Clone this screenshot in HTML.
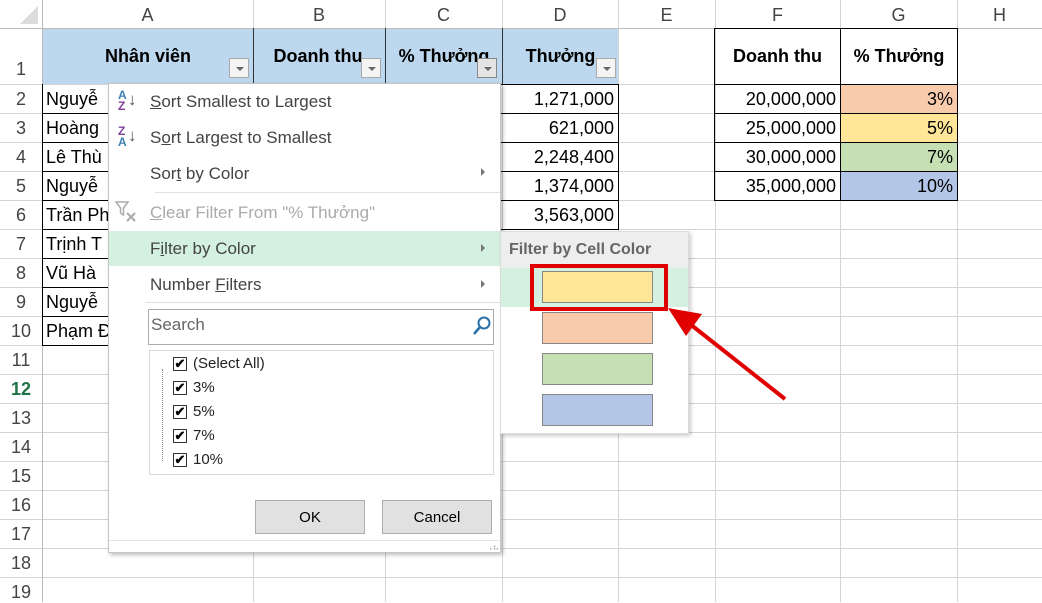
<!DOCTYPE html>
<html><head><meta charset="utf-8"><style>
*{margin:0;padding:0;box-sizing:border-box}
body{width:1042px;height:602px;overflow:hidden;background:#fff;font-family:"Liberation Sans",sans-serif;position:relative}
.a{position:absolute}
.vl{position:absolute;top:0;width:1px;height:602px;background:#d4d4d4}
.hl{position:absolute;left:0;height:1px;width:1042px;background:#d4d4d4}
.ch{position:absolute;top:0;height:28px;line-height:30px;text-align:center;color:#444;font-size:18px}
.rh{position:absolute;left:0;width:42px;text-align:center;color:#444;font-size:18px}
.c{position:absolute;font-size:18px;color:#000;white-space:nowrap;overflow:hidden}
.r{text-align:right;padding-right:4px}
.b{font-weight:bold}
.dd{position:absolute;width:20px;height:20px;border:1px solid #aaa;background:#f4f4f4}
.dd:after{content:"";position:absolute;left:6px;top:8px;border-left:4px solid transparent;border-right:4px solid transparent;border-top:4px solid #666}
.mi{position:absolute;left:150px;font-size:17px;color:#444}
.sw{position:absolute;left:542px;width:111px;height:32px;border:1px solid #888}
.cb{position:absolute;left:173px;width:14px;height:14px;border:1px solid #333;font-size:13px;line-height:12px;text-align:center;font-weight:bold}
.cl{position:absolute;left:193px;font-size:15px;color:#222}
</style></head><body>
<div class="hl" style="top:28px;background:#bbb"></div>
<div class="hl" style="top:84px"></div><div class="hl" style="top:113px"></div><div class="hl" style="top:142px"></div><div class="hl" style="top:171px"></div><div class="hl" style="top:200px"></div><div class="hl" style="top:229px"></div><div class="hl" style="top:258px"></div><div class="hl" style="top:287px"></div><div class="hl" style="top:316px"></div><div class="hl" style="top:345px"></div><div class="hl" style="top:374px"></div><div class="hl" style="top:403px"></div><div class="hl" style="top:432px"></div><div class="hl" style="top:461px"></div><div class="hl" style="top:490px"></div><div class="hl" style="top:519px"></div><div class="hl" style="top:548px"></div><div class="hl" style="top:577px"></div>
<div class="vl" style="left:42px;background:#bbb"></div><div class="vl" style="left:253px"></div><div class="vl" style="left:385px"></div><div class="vl" style="left:502px"></div><div class="vl" style="left:618px"></div><div class="vl" style="left:715px"></div><div class="vl" style="left:840px"></div><div class="vl" style="left:957px"></div>
<div class="a" style="left:0;top:0;width:42px;height:28px;background:#fff"></div>
<div class="a" style="left:20px;top:6px;width:0;height:0;border-left:18px solid transparent;border-bottom:18px solid #dcdcdc"></div>
<div class="ch" style="left:42px;width:211px">A</div><div class="ch" style="left:253px;width:132px">B</div><div class="ch" style="left:385px;width:117px">C</div><div class="ch" style="left:502px;width:116px">D</div><div class="ch" style="left:618px;width:97px">E</div><div class="ch" style="left:715px;width:125px">F</div><div class="ch" style="left:840px;width:117px">G</div><div class="ch" style="left:957px;width:85px">H</div>
<div class="rh" style="top:59px">1</div><div class="rh" style="top:89px">2</div><div class="rh" style="top:118px">3</div><div class="rh" style="top:147px">4</div><div class="rh" style="top:176px">5</div><div class="rh" style="top:205px">6</div><div class="rh" style="top:234px">7</div><div class="rh" style="top:263px">8</div><div class="rh" style="top:292px">9</div><div class="rh" style="top:321px">10</div><div class="rh" style="top:350px">11</div><div class="rh" style="top:379px;color:#217346;font-weight:bold">12</div><div class="rh" style="top:408px">13</div><div class="rh" style="top:437px">14</div><div class="rh" style="top:466px">15</div><div class="rh" style="top:495px">16</div><div class="rh" style="top:524px">17</div><div class="rh" style="top:553px">18</div><div class="rh" style="top:582px">19</div>
<div class="a" style="left:43px;top:29px;width:575px;height:55px;background:#bdd7ee"></div>
<div class="a" style="left:253px;top:28px;width:1px;height:56px;background:#333"></div>
<div class="a" style="left:385px;top:28px;width:1px;height:56px;background:#333"></div>
<div class="a" style="left:502px;top:28px;width:1px;height:56px;background:#333"></div>
<div class="c b" style="left:43px;top:46px;width:210px;text-align:center">Nhân viên</div>
<div class="c b" style="left:254px;top:46px;width:128px;text-align:center">Doanh thu</div>
<div class="c b" style="left:386px;top:46px;width:116px;text-align:center">% Thưởng</div>
<div class="c b" style="left:503px;top:46px;width:115px;text-align:center">Thưởng</div>
<div class="dd" style="left:229px;top:58px"></div><div class="dd" style="left:361px;top:58px"></div><div class="dd" style="left:477px;top:58px;border-color:#888;background:#e4e4e4"></div><div class="dd" style="left:596px;top:58px"></div>
<div class="a" style="left:42px;top:84px;width:1px;height:261px;background:#000"></div>
<div class="a" style="left:42px;top:84px;width:70px;height:262px;border-bottom:1px solid #000"></div>
<div class="c" style="left:46px;top:89px">Nguyễ</div><div class="c" style="left:46px;top:118px">Hoàng</div><div class="c" style="left:46px;top:147px">Lê Thù</div><div class="c" style="left:46px;top:176px">Nguyễ</div><div class="c" style="left:46px;top:205px">Trần Ph</div><div class="c" style="left:46px;top:234px">Trịnh T</div><div class="c" style="left:46px;top:263px">Vũ Hà</div><div class="c" style="left:46px;top:292px">Nguyễ</div><div class="c" style="left:46px;top:321px">Phạm Đ</div>
<div class="a" style="left:42px;top:113px;width:66px;height:1px;background:#000"></div><div class="a" style="left:42px;top:142px;width:66px;height:1px;background:#000"></div><div class="a" style="left:42px;top:171px;width:66px;height:1px;background:#000"></div><div class="a" style="left:42px;top:200px;width:66px;height:1px;background:#000"></div><div class="a" style="left:42px;top:229px;width:66px;height:1px;background:#000"></div><div class="a" style="left:42px;top:258px;width:66px;height:1px;background:#000"></div><div class="a" style="left:42px;top:287px;width:66px;height:1px;background:#000"></div><div class="a" style="left:42px;top:316px;width:66px;height:1px;background:#000"></div>
<div class="a" style="left:500px;top:84px;width:119px;height:146px;border:1px solid #000;border-left:none"></div>
<div class="a" style="left:500px;top:113px;width:118px;height:1px;background:#000"></div><div class="a" style="left:500px;top:142px;width:118px;height:1px;background:#000"></div><div class="a" style="left:500px;top:171px;width:118px;height:1px;background:#000"></div><div class="a" style="left:500px;top:200px;width:118px;height:1px;background:#000"></div>
<div class="c r" style="left:503px;top:89px;width:115px">1,271,000</div><div class="c r" style="left:503px;top:118px;width:115px">621,000</div><div class="c r" style="left:503px;top:147px;width:115px">2,248,400</div><div class="c r" style="left:503px;top:176px;width:115px">1,374,000</div><div class="c r" style="left:503px;top:205px;width:115px">3,563,000</div>
<div class="a" style="left:841px;top:85px;width:116px;height:28px;background:#f8cbad"></div>
<div class="a" style="left:841px;top:114px;width:116px;height:28px;background:#ffe699"></div>
<div class="a" style="left:841px;top:143px;width:116px;height:28px;background:#c6e0b4"></div>
<div class="a" style="left:841px;top:172px;width:116px;height:28px;background:#b4c6e7"></div>
<div class="a" style="left:714px;top:28px;width:244px;height:173px;border:1px solid #000"></div>
<div class="a" style="left:840px;top:28px;width:1px;height:172px;background:#000"></div>
<div class="a" style="left:714px;top:84px;width:243px;height:1px;background:#000"></div><div class="a" style="left:714px;top:113px;width:243px;height:1px;background:#000"></div><div class="a" style="left:714px;top:142px;width:243px;height:1px;background:#000"></div><div class="a" style="left:714px;top:171px;width:243px;height:1px;background:#000"></div>
<div class="c b" style="left:715px;top:46px;width:125px;text-align:center">Doanh thu</div>
<div class="c b" style="left:841px;top:46px;width:116px;text-align:center">% Thưởng</div>
<div class="c r" style="left:715px;top:89px;width:125px">20,000,000</div><div class="c r" style="left:715px;top:118px;width:125px">25,000,000</div><div class="c r" style="left:715px;top:147px;width:125px">30,000,000</div><div class="c r" style="left:715px;top:176px;width:125px">35,000,000</div>
<div class="c r" style="left:841px;top:89px;width:116px">3%</div><div class="c r" style="left:841px;top:118px;width:116px">5%</div><div class="c r" style="left:841px;top:147px;width:116px">7%</div><div class="c r" style="left:841px;top:176px;width:116px">10%</div>
<div class="a" style="left:108px;top:83px;width:393px;height:470px;background:#fff;border:1px solid #c6c6c6;box-shadow:2px 2px 4px rgba(0,0,0,.25)"></div>
<div class="a" style="left:109px;top:231px;width:391px;height:35px;background:#d3f0e0"></div>
<div class="a" style="left:118px;top:90px;font-size:12px;font-weight:bold;line-height:11px;color:#3c7fb1">A<br><span style="color:#7e3f98">Z</span></div><div class="a" style="left:128px;top:90px;font-size:17px;color:#555">↓</div>
<div class="a" style="left:118px;top:126px;font-size:12px;font-weight:bold;line-height:11px;color:#7e3f98">Z<br><span style="color:#3c7fb1">A</span></div><div class="a" style="left:128px;top:126px;font-size:17px;color:#555">↓</div>
<div class="mi" style="top:92px"><u>S</u>ort Smallest to Largest</div>
<div class="mi" style="top:128px">S<u>o</u>rt Largest to Smallest</div>
<div class="mi" style="top:164px">Sor<u>t</u> by Color</div>
<div class="a" style="left:155px;top:192px;width:345px;height:1px;background:#e0e0e0"></div>
<svg class="a" style="left:115px;top:201px" width="24" height="22" viewBox="0 0 24 22"><path d="M1 1H13L8.5 7V14L5.5 12V7Z" fill="none" stroke="#aaa" stroke-width="1.5"/><path d="M12 12L20 20M20 12L12 20" stroke="#aaa" stroke-width="2"/></svg>
<div class="mi" style="top:203px;color:#aaa"><u>C</u>lear Filter From "% Thưởng"</div>
<div class="mi" style="top:239px">F<u>i</u>lter by Color</div>
<div class="mi" style="top:275px">Number <u>F</u>ilters</div>
<div class="a" style="left:481px;top:168px;border-top:4px solid transparent;border-bottom:4px solid transparent;border-left:4px solid #777"></div>
<div class="a" style="left:481px;top:244px;border-top:4px solid transparent;border-bottom:4px solid transparent;border-left:4px solid #777"></div>
<div class="a" style="left:481px;top:280px;border-top:4px solid transparent;border-bottom:4px solid transparent;border-left:4px solid #777"></div>
<div class="a" style="left:145px;top:302px;width:355px;height:1px;background:#e0e0e0"></div>
<div class="a" style="left:148px;top:309px;width:346px;height:36px;border:1px solid #aaa"></div>
<div class="a" style="left:151px;top:315px;font-size:17px;color:#666">Search</div>
<svg class="a" style="left:471px;top:315px" width="22" height="22" viewBox="0 0 22 22"><circle cx="13" cy="8" r="5.5" fill="none" stroke="#2b6fa8" stroke-width="2"/><line x1="9" y1="12" x2="3" y2="19" stroke="#2b6fa8" stroke-width="2.5"/></svg>
<div class="a" style="left:149px;top:350px;width:345px;height:125px;border:1px solid #d8d8d8"></div>
<div class="a" style="left:162px;top:369px;width:1px;height:92px;border-left:1px dotted #888"></div>
<div class="cb" style="top:357px">✔</div><div class="cl" style="top:355px">(Select All)</div>
<div class="cb" style="top:381px">✔</div><div class="cl" style="top:379px">3%</div>
<div class="cb" style="top:405px">✔</div><div class="cl" style="top:403px">5%</div>
<div class="cb" style="top:429px">✔</div><div class="cl" style="top:427px">7%</div>
<div class="cb" style="top:453px">✔</div><div class="cl" style="top:451px">10%</div>
<div class="a" style="left:255px;top:500px;width:110px;height:34px;background:#e1e1e1;border:1px solid #adadad;text-align:center;line-height:34px;font-size:15px">OK</div>
<div class="a" style="left:382px;top:500px;width:110px;height:34px;background:#e1e1e1;border:1px solid #adadad;text-align:center;line-height:34px;font-size:15px">Cancel</div>
<div class="a" style="left:109px;top:540px;width:391px;height:1px;background:#e6e6e6"></div>
<div class="a" style="left:486px;top:542px;font-size:9px;color:#999">⠠⠦</div>
<div class="a" style="left:500px;top:231px;width:189px;height:203px;background:#fff;border:1px solid #ddd;box-shadow:2px 2px 4px rgba(0,0,0,.2)"></div>
<div class="a" style="left:501px;top:232px;width:187px;height:36px;background:#eeeeee"></div>
<div class="a" style="left:509px;top:241px;font-size:16px;font-weight:bold;color:#666">Filter by Cell Color</div>
<div class="a" style="left:501px;top:268px;width:187px;height:39px;background:#d3f0e0"></div>
<div class="sw" style="top:271px;background:#ffe699"></div>
<div class="sw" style="top:312px;background:#f8cbad"></div>
<div class="sw" style="top:353px;background:#c6e0b4"></div>
<div class="sw" style="top:394px;background:#b4c6e7"></div>
<div class="a" style="left:530px;top:264px;width:138px;height:47px;border:4px solid #e00000"></div>
<svg class="a" style="left:0;top:0" width="1042" height="602"><line x1="785" y1="399" x2="690" y2="324" stroke="#e00000" stroke-width="4"/><polygon points="668,308 702,314 686,336" fill="#e00000"/></svg>
</body></html>
